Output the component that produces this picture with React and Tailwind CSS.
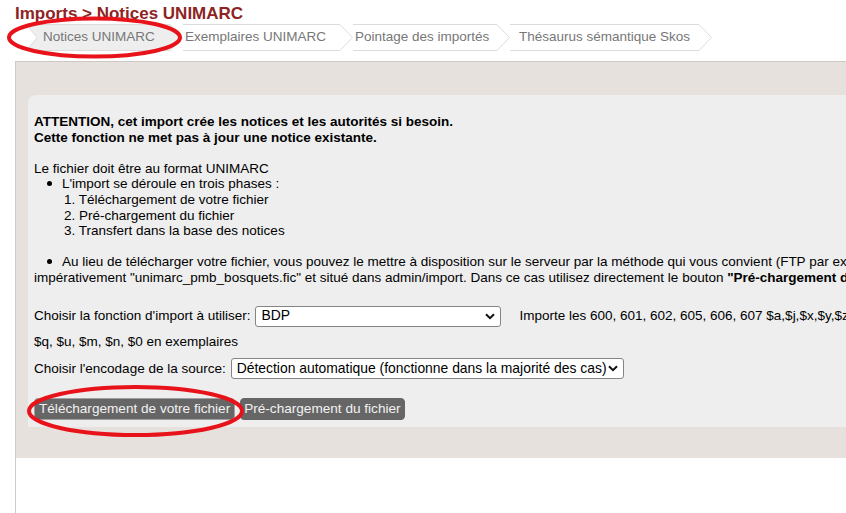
import React from 'react';

const Chevron = ({ fill = 'white' }) => (
    <svg width="13" height="27" viewBox="0 0 13 27" className="shrink-0">
        <polygon points="0,0 12.5,13.5 0,27" fill={fill} />
        <polyline points="0,0.5 12.5,13.5 0,26.5" fill="none" stroke="#dcdcdc" strokeWidth="1" />
    </svg>
);

const Select = ({ value, width, size }) => (
    <div className={`flex h-[21px] ${width} items-center justify-between rounded-[3px] border border-[#858585] bg-white pl-[5px] pr-[5px] ${size} text-black`}>
        <span className="whitespace-nowrap">{value}</span>
        <svg width="10" height="7" viewBox="0 0 10 7" className="shrink-0">
            <path d="M1 1.2 L5 5.2 L9 1.2" fill="none" stroke="#111" strokeWidth="2" />
        </svg>
    </div>
);

const Dot = () => (
    <span className="ml-[13px] mr-[10px] inline-block h-[5px] w-[5px] rounded-full bg-black align-[2px]" />
);

export default function App() {
    return (
        <div className="relative min-h-[513px] w-[846px] overflow-hidden bg-white font-['Liberation_Sans',Arial,sans-serif]">
            <h1 className="pl-[15px] pt-[4px] text-[17px] font-bold leading-[20px] text-[#8e2323]">
                Imports &gt; Notices UNIMARC
            </h1>

            <div className="ml-[27px] flex h-[27px] text-[13.5px] text-[#777]">
                <div className="relative flex w-[143px] items-center border-y border-[#dcdcdc] bg-[#eeeeee] pl-[16px]">
                    <svg width="11" height="25" viewBox="0 0 11 25" className="absolute left-0 top-0">
                        <polygon points="0,0 10,12.5 0,25" fill="white" />
                        <polyline points="0,0 10,12.5 0,25" fill="none" stroke="#dcdcdc" strokeWidth="1" />
                    </svg>
                    <span className="whitespace-nowrap">Notices UNIMARC</span>
                </div>
                <Chevron fill="#eeeeee" />
                <div className="flex w-[157px] items-center border-y border-[#dcdcdc] pl-[2px]">
                    <span className="whitespace-nowrap">Exemplaires UNIMARC</span>
                </div>
                <Chevron />
                <div className="flex w-[144px] items-center border-y border-[#dcdcdc] pl-[2px]">
                    <span className="whitespace-nowrap">Pointage des importés</span>
                </div>
                <Chevron />
                <div className="flex w-[189px] items-center border-y border-[#dcdcdc] pl-[9px]">
                    <span className="whitespace-nowrap">Thésaurus sémantique Skos</span>
                </div>
                <Chevron />
            </div>

            <div className="ml-[15px] mt-[10px] min-h-[452px] border-l border-[#cccccc]">
                <div className="border-t border-[#cdc8c3] bg-[#e6e1dc] pb-[31px] pl-[12px] pt-[33px]">
                    <div className="w-[1400px] rounded-tl-[8px] bg-[#eeeeee] pb-[7px] pl-[6px] pt-[19px] text-[13.5px] leading-[15.6px] text-black">
                        <p className="font-bold">ATTENTION, cet import crée les notices et les autorités si besoin.</p>
                        <p className="font-bold">Cette fonction ne met pas à jour une notice existante.</p>
                        <p className="mt-[15.6px]">Le fichier doit être au format UNIMARC</p>
                        <p><Dot />L'import se déroule en trois phases :</p>
                        <p className="pl-[30px]">1. Téléchargement de votre fichier</p>
                        <p className="pl-[30px]">2. Pré-chargement du fichier</p>
                        <p className="pl-[30px]">3. Transfert dans la base des notices</p>
                        <p className="mt-[15.6px] whitespace-nowrap">
                            <Dot />Au lieu de télécharger votre fichier, vous pouvez le mettre à disposition sur le serveur par la méthode qui vous convient (FTP par exemple), ce fichier doit être nommé
                        </p>
                        <p className="whitespace-nowrap">
                            impérativement "unimarc_pmb_bosquets.fic" et situé dans admin/import. Dans ce cas utilisez directement le bouton <b>"Pré-chargement du fichier"</b>.
                        </p>

                        <div className="mt-[20px] flex items-center whitespace-nowrap">
                            <span>Choisir la fonction d'import à utiliser:</span>
                            <div className="ml-[5px]">
                                <Select value="BDP" width="w-[246px]" size="text-[13.9px]" />
                            </div>
                            <span className="ml-[18px]">Importe les 600, 601, 602, 605, 606, 607 $a,$j,$x,$y,$z,</span>
                        </div>
                        <p className="mt-[7px]">$q, $u, $m, $n, $0 en exemplaires</p>
                        <div className="mt-[9px] flex items-center whitespace-nowrap">
                            <span>Choisir l'encodage de la source:</span>
                            <div className="ml-[5px]">
                                <Select value="Détection automatique (fonctionne dans la majorité des cas)" width="w-[393px]" size="text-[13.9px]" />
                            </div>
                        </div>

                        <div className="mt-[19px] flex gap-[5px]">
                            <button className="h-[22px] rounded-[4px] border border-[#a0a0a0] bg-[#666666] px-[4px] text-[13.6px] leading-[20px] text-[#f2f2f2]">
                                Téléchargement de votre fichier
                            </button>
                            <button className="h-[22px] rounded-[4px] border border-[#666666] bg-[#666666] px-[3px] text-[13.6px] leading-[20px] text-[#f2f2f2]">
                                Pré-chargement du fichier
                            </button>
                        </div>
                    </div>
                </div>
            </div>

            <svg className="pointer-events-none absolute left-0 top-0" width="846" height="513">
                <ellipse cx="94.5" cy="37.5" rx="85.5" ry="19" fill="none" stroke="#e8131a" strokeWidth="4" />
                <ellipse cx="135.5" cy="411" rx="106.5" ry="24" fill="none" stroke="#e8131a" strokeWidth="4" />
            </svg>
        </div>
    );
}
